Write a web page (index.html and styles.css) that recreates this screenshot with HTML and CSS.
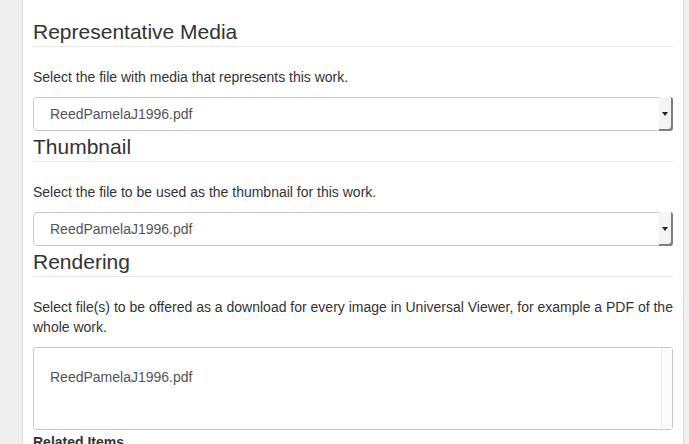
FILE: index.html
```html
<!DOCTYPE html>
<html lang="en">
<head>
  <meta charset="UTF-8">
  <meta name="viewport" content="width=device-width, initial-scale=1.0">
  <title>Files</title>
  <link rel="stylesheet" href="styles.css">
</head>
<body>
  <div class="painel">
    <!-- Representative Media -->
    <h3 class="titulo">Representative Media</h3>
    <p class="ajuda">Select the file with media that represents this work.</p>
    <div class="seletor">
      <span class="seletor-texto">ReedPamelaJ1996.pdf</span>
      <span class="seletor-seta"></span>
    </div>

    <!-- Thumbnail -->
    <h3 class="titulo">Thumbnail</h3>
    <p class="ajuda">Select the file to be used as the thumbnail for this work.</p>
    <div class="seletor">
      <span class="seletor-texto">ReedPamelaJ1996.pdf</span>
      <span class="seletor-seta"></span>
    </div>

    <!-- Rendering -->
    <h3 class="titulo">Rendering</h3>
    <p class="ajuda">Select file(s) to be offered as a download for every image in Universal Viewer, for example a PDF of the whole work.</p>
    <div class="lista">
      <div class="lista-itens">
        <div class="lista-item">ReedPamelaJ1996.pdf</div>
      </div>
      <div class="lista-barra"></div>
    </div>

    <label class="rotulo">Related Items</label>
  </div>
</body>
</html>
```

FILE: styles.css
```css
body {
  margin: 0;
  padding: 0;
  font-family: "Liberation Sans", Arial, sans-serif;
  font-size: 14px;
  line-height: 20px;
  color: #333;
  background: #efefef;
  height: 100vh;
  overflow: hidden;
}

.painel {
  margin-left: 22px;
  width: 640px;
  min-height: 100vh;
  padding: 20px 10px 0;
  background: #fff;
  border-left: 1px solid #dcdcdc;
  border-right: 1px solid #dcdcdc;
}

/* Titulos das secoes */
.titulo {
  margin: 4px 0 0;
  padding-bottom: 2px;
  font-size: 21px;
  font-weight: normal;
  line-height: 24px;
  color: #333;
  border-bottom: 1px solid #e8e8e8;
}

.titulo:first-child {
  margin-top: 0;
}

.ajuda {
  margin: 20px 0 10px;
}

/* Select fechado */
.seletor {
  display: flex;
  height: 34px;
  box-sizing: border-box;
  border: 1px solid #c8c8c8;
  border-radius: 4px;
  color: #555;
}

.seletor-texto {
  flex: 1;
  padding-left: 16px;
  line-height: 32px;
}

.seletor-seta {
  width: 14px;
  display: flex;
  align-items: center;
  justify-content: center;
  background: #f4f4f4;
  border-radius: 0 3px 3px 0;
  box-shadow: inset -2px -2px 0 #7d7d7d;
  margin: -1px -1px -1px 0;
}

.seletor-seta::before {
  content: "";
  border-left: 3px solid transparent;
  border-right: 3px solid transparent;
  border-top: 4px solid #222;
  margin: 0 2px 1px 0;
}

/* Select multiplo */
.lista {
  display: flex;
  height: 83px;
  box-sizing: border-box;
  border: 1px solid #c8c8c8;
  border-radius: 3px;
  color: #555;
}

.lista-itens {
  flex: 1;
  padding: 19px 16px;
}

.lista-barra {
  width: 10px;
  background: #fafafa;
  border-left: 1px solid #ececec;
}

.rotulo {
  display: block;
  margin-top: 2px;
  font-weight: bold;
}
```
